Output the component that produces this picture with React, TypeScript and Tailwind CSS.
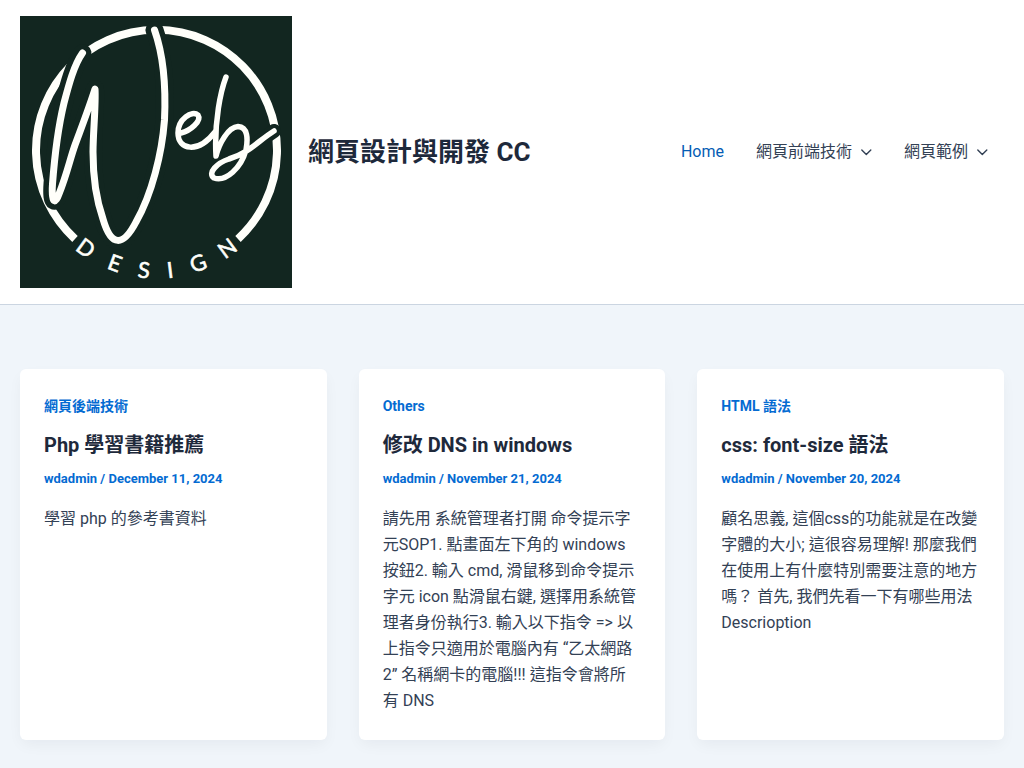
interface NavItem {
  label: string;
  active?: boolean;
  hasMenu?: boolean;
}

interface Post {
  category: string;
  title: string;
  author: string;
  date: string;
  excerpt: string;
}

const NAV_ITEMS: NavItem[] = [
  { label: 'Home', active: true },
  { label: '網頁前端技術', hasMenu: true },
  { label: '網頁範例', hasMenu: true },
];

const POSTS: Post[] = [
  {
    category: '網頁後端技術',
    title: 'Php 學習書籍推薦',
    author: 'wdadmin',
    date: 'December 11, 2024',
    excerpt: '學習 php 的參考書資料',
  },
  {
    category: 'Others',
    title: '修改 DNS in windows',
    author: 'wdadmin',
    date: 'November 21, 2024',
    excerpt:
      '請先用 系統管理者打開 命令提示字元SOP1. 點畫面左下角的 windows 按鈕2. 輸入 cmd, 滑鼠移到命令提示字元 icon 點滑鼠右鍵, 選擇用系統管理者身份執行3. 輸入以下指令 => 以上指令只適用於電腦內有 “乙太網路 2” 名稱網卡的電腦!!! 這指令會將所有 DNS',
  },
  {
    category: 'HTML 語法',
    title: 'css: font-size 語法',
    author: 'wdadmin',
    date: 'November 20, 2024',
    excerpt:
      '顧名思義, 這個css的功能就是在改變字體的大小; 這很容易理解! 那麼我們在使用上有什麼特別需要注意的地方嗎？ 首先, 我們先看一下有哪些用法 Descrioption',
  },
];

const LOGO_LETTERS = [
  { char: 'D', x: 66, y: 232, angle: 36 },
  { char: 'E', x: 95, y: 247, angle: 20 },
  { char: 'S', x: 124, y: 254, angle: 6 },
  { char: 'I', x: 150, y: 254, angle: -7 },
  { char: 'G', x: 178, y: 247, angle: -20 },
  { char: 'N', x: 207, y: 232, angle: -36 },
];

const W_PATH =
  'M62.5 37 C54 49 49 68 44 87 C38 112 34 148 32.5 168 C31 190 36 187 39 178 C47 158 50 143 55 129 C62 110 69 92 75 73 C76 88 73 118 73 136 C73 160 76 183 83 203 C91 231 103 231 116 206 C132 178 142 137 144.5 104 C146 72 143 38 134.5 14';

function Logo() {
  return (
    <svg viewBox="0 0 272 272" className="block size-[272px]" role="img" aria-label="Web Design">
      <rect width="272" height="272" fill="#122620" />
      <g fill="none" strokeLinecap="round" strokeLinejoin="round">
        <path d="M55 223 A120.5 120.5 0 1 1 218 223" stroke="#fffffa" strokeWidth="8" strokeLinecap="butt" />
        {/* dark outline cuts the ring where the lettering crosses it */}
        <path d={W_PATH} stroke="#122620" strokeWidth="18" />
        <path d="M238 126 L254 115" stroke="#122620" strokeWidth="14" />
        <path d={W_PATH} stroke="#fffffa" strokeWidth="7" />
        <path
          d="M161 117 C170 115 182 105 178 99 C172 94 158 103 158 117 C158 134 178 138 195 116"
          stroke="#fffffa"
          strokeWidth="5.5"
        />
        <path
          d="M206 61 C201 74 194 105 196 140 C199 128 208 111 218 110.5 C228 111 228 123 226 134 C221 152 206 166 194 162 C187 157 197 147 209 143 C229 137 238 125 254 115"
          stroke="#fffffa"
          strokeWidth="5.5"
        />
      </g>
      {LOGO_LETTERS.map(letter => (
        <text
          key={letter.char}
          transform={`translate(${letter.x} ${letter.y}) rotate(${letter.angle})`}
          textAnchor="middle"
          y="8"
          fill="#fffffa"
          stroke="#fffffa"
          strokeWidth="0.6"
          className="font-['Lato',sans-serif] text-[22px]"
        >
          {letter.char}
        </text>
      ))}
    </svg>
  );
}

function MenuArrow() {
  return (
    <svg viewBox="0 0 12 12" className="ml-2 size-3" fill="none" aria-hidden="true">
      <path
        d="M1.8 4 L6.3 8.5 L10.8 4"
        stroke="currentColor"
        strokeWidth="1.4"
        strokeLinecap="round"
        strokeLinejoin="round"
      />
    </svg>
  );
}

function Header() {
  return (
    <header className="flex items-center justify-between border-b border-[#cbd5e1] bg-white px-5 py-4">
      <div className="flex items-center gap-4">
        <a href="#">
          <Logo />
        </a>
        <h1 className="text-[26px] leading-8 font-bold text-[#1e293b]">
          <a href="#">網頁設計與開發 CC</a>
        </h1>
      </div>
      <nav className="flex items-center">
        {NAV_ITEMS.map(item => (
          <a
            key={item.label}
            href="#"
            className={`flex items-center px-4 text-base whitespace-nowrap ${
              item.active ? 'text-[#045cb4]' : 'text-[#334155]'
            }`}
          >
            {item.label}
            {item.hasMenu && <MenuArrow />}
          </a>
        ))}
      </nav>
    </header>
  );
}

function PostCard({ post }: { post: Post }) {
  return (
    <article className="rounded-md bg-white px-6 pt-6 pb-[26px] shadow-[0_6px_15px_-2px_rgba(16,24,40,0.05)]">
      <a href="#" className="block text-sm leading-[26px] font-bold text-[#046bd2]">
        {post.category}
      </a>
      <h2 className="mt-3 text-xl leading-7 font-bold text-[#1e293b]">
        <a href="#">{post.title}</a>
      </h2>
      <div className="mt-2 text-[13px] leading-6 font-bold text-[#046bd2]">
        <a href="#">{post.author}</a> / {post.date}
      </div>
      <p className="mt-[15px] text-base leading-[26px] text-[#334155]">{post.excerpt}</p>
    </article>
  );
}

export default function App() {
  return (
    <div
      lang="zh-Hant"
      className="min-h-screen bg-[#f0f5fa] font-[Roboto,'Noto_Sans_CJK_TC',sans-serif]"
    >
      <Header />
      <main className="grid grid-cols-3 gap-8 px-5 pt-16 pb-7">
        {POSTS.map(post => (
          <PostCard key={post.title} post={post} />
        ))}
      </main>
    </div>
  );
}
